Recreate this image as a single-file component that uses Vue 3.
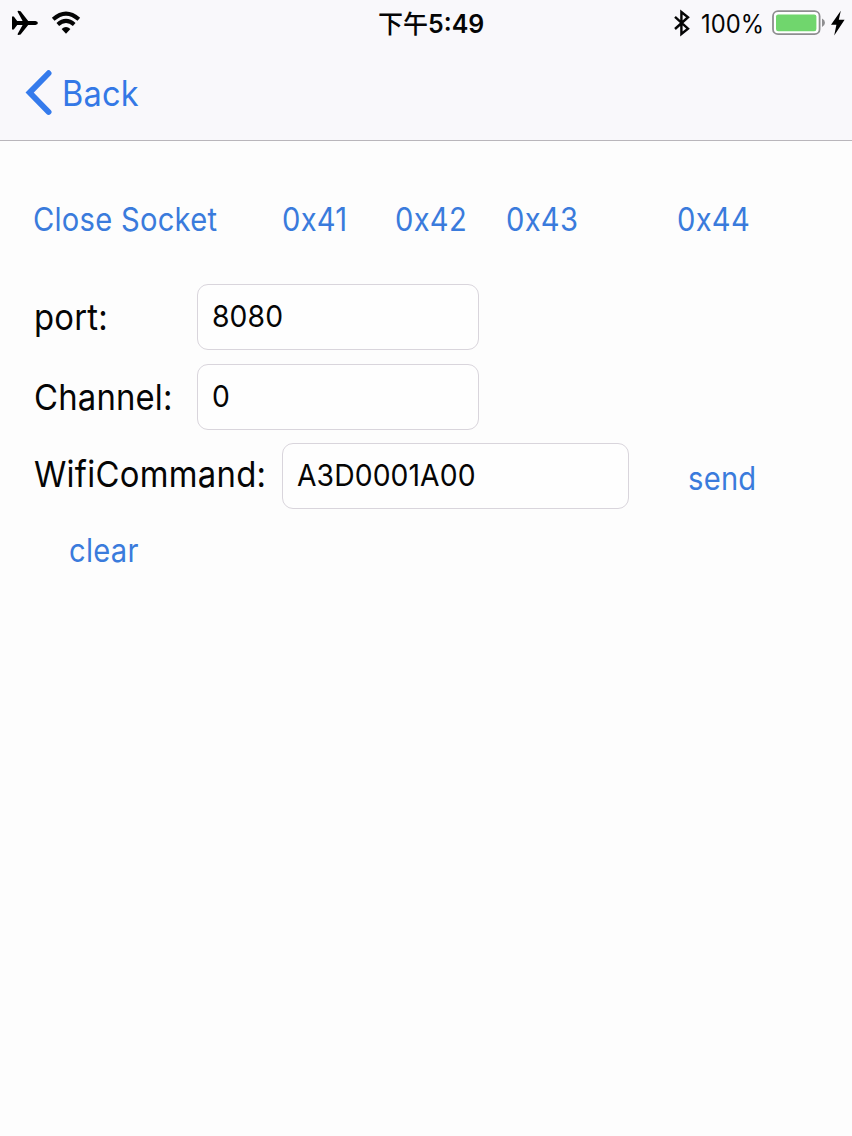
<template>
  <div class="screen">
    <header class="top-bar">
      <div class="status-bar">
        <div class="status-left">
          <svg class="icon-plane" width="28" height="26" viewBox="0 0 28 26">
            <path d="M1 6.4 L2.8 6.4 L6.2 10.9 L11.6 10.9 L6.6 1.8 Q6.4 0.8 7.4 0.8 L9.6 1.2 L17.2 10.9 L24.4 10.9 Q26.9 11.2 26.9 12.9 Q26.9 14.6 24.4 14.9 L17.2 14.9 L9.6 24.6 L7.4 25 Q6.4 25 6.6 24 L11.6 14.9 L6.2 14.9 L2.8 19.4 L1 19.4 Z" />
          </svg>
          <svg class="icon-wifi" width="30" height="24" viewBox="0 0 30 24">
            <path class="arc" d="M2.2 8.3 Q15 -3.2 27.8 8.3" />
            <path class="arc" d="M6.8 13.4 Q15 6.2 23.2 13.4" />
            <path d="M10.6 18 Q15 14.2 19.4 18 L15 22.8 Z" />
          </svg>
        </div>
        <div class="status-time"><span class="cjk">下午</span><span class="clock">5:49</span></div>
        <div class="status-right">
          <svg class="icon-bluetooth" width="18" height="28" viewBox="0 0 18 28">
            <path d="M2 7.8 L15 19.6 L8.4 25 L8.4 3 L15 8.2 L2 20" />
          </svg>
          <span class="percent">100%</span>
          <svg class="icon-battery" width="54" height="26" viewBox="0 0 54 26">
            <rect class="shell" x="1" y="1.2" width="46.6" height="23" rx="5" />
            <rect class="level" x="4" y="4.4" width="40.4" height="16.8" rx="2.2" />
            <path class="cap" d="M50 8.6 Q53 10.2 53 12.8 Q53 15.4 50 17 Z" />
          </svg>
          <svg class="icon-bolt" width="14" height="26" viewBox="0 0 14 26">
            <path d="M9.8 0.8 L0 14.8 L5.4 14.8 L3.2 25.4 L13.6 9.8 L7.8 9.8 Z" />
          </svg>
        </div>
      </div>
      <nav class="nav-bar">
        <button class="back">
          <svg width="27" height="48" viewBox="0 0 27 48">
            <path d="M23.6 4.2 L4.6 23.6 L23.6 43" />
          </svg>
          <span class="back-text">Back</span>
        </button>
      </nav>
    </header>

    <main class="content">
      <div class="socket-row">
        <button class="link close-socket" @click="closeSocket">Close Socket</button>
        <button v-for="code in codes" :key="code" class="link" @click="sendCode(code)">{{ code }}</button>
      </div>

      <div class="form-row">
        <label class="label-port" for="port">port:</label>
        <div class="field"><input id="port" v-model="port" type="text"></div>
      </div>
      <div class="form-row">
        <label class="label-channel" for="channel">Channel:</label>
        <div class="field"><input id="channel" v-model="channel" type="text"></div>
      </div>
      <div class="form-row command-row">
        <label class="label-command" for="command">WifiCommand:</label>
        <div class="field"><input id="command" v-model="command" type="text"></div>
        <button class="link send" @click="sendCode(command)">send</button>
      </div>

      <button class="link clear" @click="log = []">clear</button>
    </main>
  </div>
</template>

<script setup>
import { ref } from 'vue'

const codes = ['0x41', '0x42', '0x43', '0x44']
const port = ref('8080')
const channel = ref('0')
const command = ref('A3D0001A00')
const log = ref([])
const connected = ref(true)

const sendCode = (code) => {
  if (!connected.value) return
  log.value.push(code)
}

const closeSocket = () => {
  connected.value = false
}
</script>

<style>
body {
  background: #fdfdfd;
}
</style>

<style scoped>
.screen {
  width: 852px;
  height: 1136px;
  overflow: hidden;
  background: #fdfdfd;
  color: #050505;
  font-family: Inter, "Noto Sans CJK SC", sans-serif;
}

button {
  padding: 0;
  border: none;
  background: none;
  font-family: inherit;
  cursor: pointer;
}

.top-bar {
  box-sizing: border-box;
  height: 141px;
  background: #f9f8fb;
  border-bottom: 1px solid #b9b6bb;
}

/* Status bar */
.status-bar {
  display: grid;
  grid-template-columns: 1fr 108px 1fr;
  align-items: center;
  height: 46px;
}

.status-left,
.status-right,
.status-time {
  display: flex;
  align-items: center;
}

.status-left {
  padding-left: 11px;
  gap: 12px;
}

.status-time {
  padding-left: 6px;
  font-size: 26px;
  white-space: nowrap;
}

.cjk {
  width: 50px;
  padding-bottom: 2px;
  font-family: "Noto Sans CJK SC", sans-serif;
  font-size: 25px;
  font-weight: 500;
  line-height: 44px;
}

.clock {
  padding-top: 1px;
  font-weight: 600;
  transform: scaleX(0.96);
  transform-origin: left;
}

.status-right {
  justify-content: flex-end;
  padding-right: 7px;
}

.icon-wifi .arc {
  fill: none;
  stroke: #050505;
  stroke-width: 4;
}

.icon-bluetooth path {
  fill: none;
  stroke: #050505;
  stroke-width: 2.4;
}

.percent {
  width: 62px;
  margin: 0 9px 0 10px;
  padding-top: 1px;
  font-size: 25px;
  white-space: nowrap;
  transform: scaleX(0.95);
  transform-origin: left;
}

.icon-battery .shell {
  fill: #fff;
  stroke: #8e8e90;
  stroke-width: 1.8;
}

.icon-battery .level {
  fill: #70d66d;
}

.icon-battery .cap {
  fill: #8e8e90;
}

.icon-bolt {
  margin-left: 5px;
}

/* Navigation */
.nav-bar {
  display: flex;
  align-items: center;
  height: 94px;
  padding-left: 25px;
}

.back {
  display: flex;
  align-items: center;
  gap: 10px;
  color: #3478e6;
}

.back svg path {
  fill: none;
  stroke: #357bec;
  stroke-width: 5.8;
  stroke-linecap: round;
  stroke-linejoin: miter;
}

.back-text {
  padding-bottom: 1px;
  font-size: 35px;
  letter-spacing: 0.2px;
  transform: scaleX(0.93);
  transform-origin: left;
}

/* Form */
.content {
  padding: 46px 34px 0;
}

.link {
  height: 64px;
  font-size: 32px;
  letter-spacing: 0.3px;
  color: #3a7bdc;
  text-align: left;
  white-space: nowrap;
  transform: scaleX(0.91);
  transform-origin: left;
}

.close-socket {
  margin-left: -1px;
}

.socket-row {
  display: grid;
  grid-template-columns: 248px 113px 111px 171px 90px;
  margin-bottom: 33px;
}

.form-row {
  display: grid;
  grid-template-columns: 163px 282px;
  align-items: center;
  height: 66px;
  margin-bottom: 14px;
}

.command-row {
  grid-template-columns: 248px 347px 90px;
  margin-top: -1px;
  margin-bottom: 9px;
}

label {
  font-size: 36px;
  letter-spacing: 0.2px;
  white-space: nowrap;
  transform: scaleX(0.912);
  transform-origin: left;
}

.label-channel {
  padding-bottom: 1px;
}

.label-command {
  padding-bottom: 6px;
  letter-spacing: 0.3px;
}

.field {
  box-sizing: border-box;
  align-self: start;
  height: 65.5px;
  padding: 0 14px;
  border: 1px solid #d9d5dc;
  border-radius: 11px;
  background: #fefefe;
}

.field input {
  width: 100%;
  height: 62px;
  padding: 0;
  border: none;
  outline: none;
  background: transparent;
  color: inherit;
  font-family: inherit;
  font-size: 30px;
  letter-spacing: 0.1px;
  transform: scaleX(0.943);
  transform-origin: left;
}

.send {
  margin-top: 3px;
  margin-left: 59px;
}

.clear {
  display: block;
  margin-left: 35px;
}
</style>
